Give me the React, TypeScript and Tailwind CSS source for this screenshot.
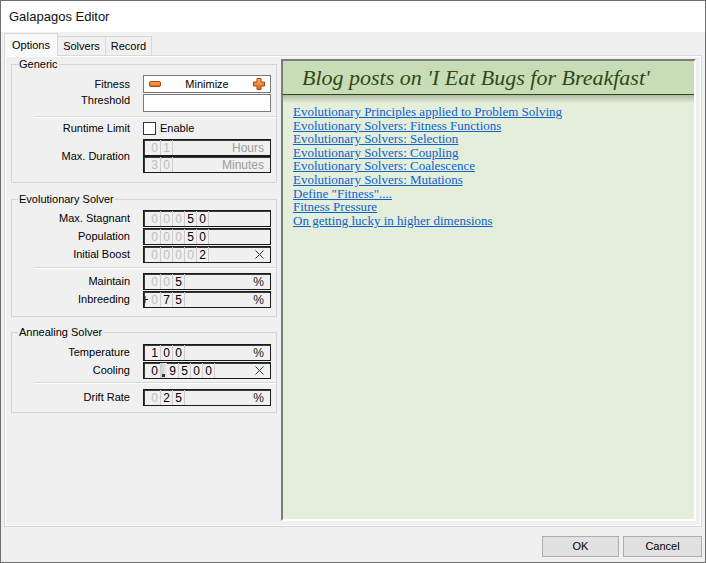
type Cell = { ch: string; dim?: boolean; dot?: boolean };

const d = (s: string, dimCount: number): Cell[] =>
  s.split("").map((ch, i) => ({ ch, dim: i < dimCount }));

function MinusIcon() {
  return (
    <svg width="12" height="6" viewBox="0 0 12 6">
      <defs>
        <linearGradient id="og1" x1="0" y1="0" x2="0" y2="1">
          <stop offset="0" stopColor="#ffb25a" />
          <stop offset="1" stopColor="#e2641c" />
        </linearGradient>
      </defs>
      <rect x="0.5" y="0.5" width="11" height="5" rx="1.5" fill="url(#og1)" stroke="#a2440f" />
    </svg>
  );
}

function PlusIcon() {
  return (
    <svg width="12" height="12" viewBox="0 0 12 12">
      <defs>
        <linearGradient id="og2" x1="0" y1="0" x2="0" y2="1">
          <stop offset="0" stopColor="#ffb25a" />
          <stop offset="1" stopColor="#e2641c" />
        </linearGradient>
      </defs>
      <path
        d="M4 0.5h4v3.5h3.5v4H8v3.5H4V8H0.5V4H4z"
        fill="url(#og2)"
        stroke="#a2440f"
        strokeLinejoin="round"
      />
    </svg>
  );
}

function Cross() {
  return (
    <svg width="9" height="9" viewBox="0 0 9 9">
      <path d="M0.5 0.5l8 8M8.5 0.5l-8 8" stroke="#333" strokeWidth="1" />
    </svg>
  );
}

function Label({ children, className = "" }: { children: React.ReactNode; className?: string }) {
  return <div className={`w-[119px] shrink-0 pr-[1px] text-right ${className}`}>{children}</div>;
}

function DigitField({
  cells,
  suffix,
  suffixDim,
  marker,
}: {
  cells: Cell[];
  suffix?: string;
  suffixDim?: boolean;
  marker?: boolean;
}) {
  return (
    <div className="flex h-[17px] w-[128px] items-stretch border border-[#1a1a1a] shadow-[inset_1px_1px_0_#3a3a3a] text-[12px] leading-none">
      <div className="flex w-[5px] shrink-0 items-center">
        {marker && (
          <svg width="5" height="9" viewBox="0 0 5 9">
            <path d="M1 1v7M1 4.5h3" stroke="#222" strokeWidth="1" />
          </svg>
        )}
      </div>
      {cells.map((c, i) =>
        c.dot ? (
          <div
            key={i}
            className="relative w-[6px] shrink-0 bg-linear-to-r from-[#cfcfcf] to-[#ececec]"
          >
            <div className="absolute bottom-[1px] left-[1px] h-[3px] w-[3px] bg-[#333]" />
          </div>
        ) : (
          <div
            key={i}
            className={`flex w-[12px] shrink-0 items-center justify-center border-r border-[#cdcdcd] ${
              c.dim ? "text-[#bdbdbd]" : "text-black"
            }`}
          >
            {c.ch}
          </div>
        )
      )}
      <div
        className={`ml-auto flex items-center pr-[6px] ${
          suffixDim ? "text-[#9d9d9d]" : "text-[#222]"
        }`}
      >
        {suffix === "×" ? <Cross /> : suffix}
      </div>
    </div>
  );
}

function Row({ label, children }: { label: string; children: React.ReactNode }) {
  return (
    <div className="flex items-center">
      <Label>{label}</Label>
      <div className="ml-[12px]">{children}</div>
    </div>
  );
}

function Sep({ className = "" }: { className?: string }) {
  return <div className={`ml-[23px] h-[2px] border-t border-b border-t-[#d9d9d9] border-b-white ${className}`} />;
}

function Group({
  title,
  className = "",
  children,
}: {
  title: string;
  className?: string;
  children: React.ReactNode;
}) {
  return (
    <fieldset className={`m-0 min-w-0 border border-[#d5d5d5] p-0 ${className}`}>
      <legend className="ml-[6px] px-[1px] text-[11px] leading-[14px]">{title}</legend>
      {children}
    </fieldset>
  );
}

const links = [
  "Evolutionary Principles applied to Problem Solving",
  "Evolutionary Solvers: Fitness Functions",
  "Evolutionary Solvers: Selection",
  "Evolutionary Solvers: Coupling",
  "Evolutionary Solvers: Coalescence",
  "Evolutionary Solvers: Mutations",
  'Define "Fitness"....',
  "Fitness Pressure",
  "On getting lucky in higher dimensions",
];

export default function App() {
  return (
    <div className="flex h-[563px] w-[706px] flex-col border border-[#6e6e6e] bg-[#f0f0f0] font-['Liberation_Sans',Arial,sans-serif] text-[11px] text-black">
      <div className="flex h-[31px] shrink-0 items-center bg-white pl-[8px] text-[13px] text-[#111]">
        Galapagos Editor
      </div>

      <div className="flex flex-col px-[3px] pt-[1px]">
        <div className="flex h-[22px] items-end">
          <div className="relative z-10 -mb-px flex h-[23px] w-[54px] items-center border border-b-0 border-[#d9d9d9] bg-[#f9f9f9] pl-[7px]">
            Options
          </div>
          <div className="flex h-[19px] w-[48px] items-center justify-center border border-l-0 border-b-0 border-[#d9d9d9] bg-[#f0f0f0]">
            Solvers
          </div>
          <div className="flex h-[19px] w-[46px] items-center justify-center border border-l-0 border-b-0 border-[#d9d9d9] bg-[#f0f0f0]">
            Record
          </div>
        </div>

        <div className="h-[472px] border border-[#d9d9d9]">
          <div className="flex h-full border border-white pl-[5px] pr-[4px]">
            <div className="flex w-[266px] shrink-0 flex-col">
              <Group title="Generic" className="pb-[9px]">
                <div className="flex flex-col gap-[1px] pt-[4px]">
                  <Row label="Fitness">
                    <div className="flex h-[18px] w-[128px] items-center border border-[#7a7a7a] bg-white px-[5px]">
                      <MinusIcon />
                      <div className="flex-1 text-center">Minimize</div>
                      <PlusIcon />
                    </div>
                  </Row>
                  <div className="flex items-center">
                    <Label className="relative -top-[3px]">Threshold</Label>
                    <div className="ml-[12px] h-[18px] w-[128px] border border-[#7a7a7a] bg-white" />
                  </div>
                </div>
                <Sep className="mt-[4px]" />
                <div className="mt-[3px] flex h-[15px] items-center">
                  <Label>Runtime Limit</Label>
                  <div className="ml-[12px] flex items-center">
                    <div className="h-[13px] w-[13px] border border-[#333] bg-white" />
                    <span className="ml-[4px]">Enable</span>
                  </div>
                </div>
                <div className="mt-[3px] flex items-center">
                  <Label>Max. Duration</Label>
                  <div className="ml-[12px] flex flex-col">
                    <DigitField cells={d("01", 2)} suffix="Hours" suffixDim />
                    <DigitField cells={d("30", 2)} suffix="Minutes" suffixDim />
                  </div>
                </div>
              </Group>

              <Group title="Evolutionary Solver" className="mt-[9px] pb-[8px]">
                <div className="flex flex-col gap-[1px] pt-[4px]">
                  <Row label="Max. Stagnant">
                    <DigitField cells={d("00050", 3)} />
                  </Row>
                  <Row label="Population">
                    <DigitField cells={d("00050", 3)} />
                  </Row>
                  <Row label="Initial Boost">
                    <DigitField cells={d("00002", 4)} suffix="×" />
                  </Row>
                </div>
                <Sep className="mt-[4px]" />
                <div className="mt-[4px] flex flex-col gap-[1px]">
                  <Row label="Maintain">
                    <DigitField cells={d("005", 2)} suffix="%" />
                  </Row>
                  <Row label="Inbreeding">
                    <DigitField cells={d("075", 1)} suffix="%" marker />
                  </Row>
                </div>
              </Group>

              <Group title="Annealing Solver" className="mt-[8px] pb-[6px]">
                <div className="flex flex-col gap-[1px] pt-[5px]">
                  <Row label="Temperature">
                    <DigitField cells={d("100", 0)} suffix="%" />
                  </Row>
                  <Row label="Cooling">
                    <DigitField
                      cells={[
                        { ch: "0" },
                        { ch: ".", dot: true },
                        { ch: "9" },
                        { ch: "5" },
                        { ch: "0" },
                        { ch: "0" },
                      ]}
                      suffix="×"
                    />
                  </Row>
                </div>
                <Sep className="mt-[3px]" />
                <div className="mt-[5px]">
                  <Row label="Drift Rate">
                    <DigitField cells={d("025", 1)} suffix="%" />
                  </Row>
                </div>
              </Group>
            </div>

            <div className="ml-[4px] mt-[2px] flex h-[462px] flex-1 flex-col border-2 border-t-[#7c7c7c] border-l-[#7c7c7c] border-r-white border-b-white bg-[#e4eedb]">
              <div className="flex h-[34px] shrink-0 items-center border-b border-[#2c4a12] bg-[#c8dcb8] pl-[19px]">
                <span className="font-['Liberation_Serif',serif] text-[22px] italic text-[#2f4a14]">
                  Blog posts on 'I Eat Bugs for Breakfast'
                </span>
              </div>
              <div className="h-[8px] shrink-0 bg-linear-to-b from-[#aebba3] to-[#e4eedb]" />
              <div className="flex flex-col items-start pl-[10px] pt-[2px] font-['Liberation_Serif',serif] text-[13px] leading-[13.6px]">
                {links.map((l) => (
                  <a key={l} href="#" className="text-[#0b63cf] underline">
                    {l}
                  </a>
                ))}
              </div>
            </div>
          </div>
        </div>
      </div>

      <div className="mt-[9px] flex justify-end gap-[4px] pr-[3px]">
        <button className="flex h-[21px] w-[77px] items-center justify-center border border-[#adadad] bg-[#e1e1e1] text-[11px]">
          OK
        </button>
        <button className="flex h-[21px] w-[79px] items-center justify-center border border-[#adadad] bg-[#e1e1e1] text-[11px]">
          Cancel
        </button>
      </div>
    </div>
  );
}
